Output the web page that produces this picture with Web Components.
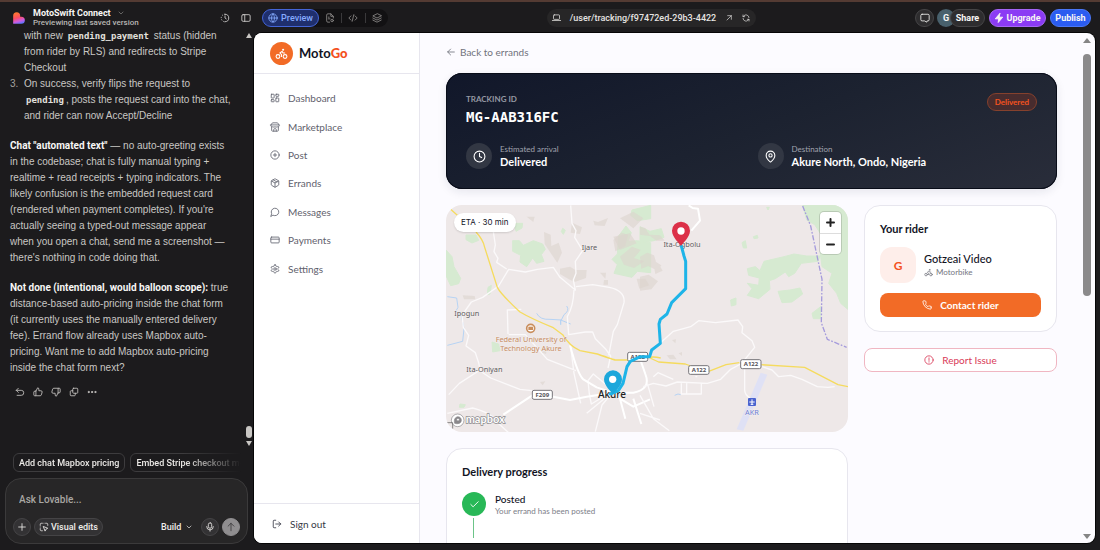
<!DOCTYPE html>
<html lang="en">
<head>
<meta charset="utf-8">
<title>MotoSwift Connect</title>
<style>
  html, body { margin: 0; height: 100%; }
  body { background: #1c1b1d; overflow: hidden; font-family: Roboto, sans-serif; }
</style>
</head>
<body>
<app-shell>
  <top-bar slot="top"></top-bar>
  <chat-panel slot="chat"></chat-panel>
  <preview-frame slot="preview">
    <moto-sidebar slot="side">
      <nav-item icon="grid">Dashboard</nav-item>
      <nav-item icon="store">Marketplace</nav-item>
      <nav-item icon="plusc">Post</nav-item>
      <nav-item icon="box">Errands</nav-item>
      <nav-item icon="msg">Messages</nav-item>
      <nav-item icon="card">Payments</nav-item>
      <nav-item icon="gear">Settings</nav-item>
    </moto-sidebar>
    <tracking-hero>
      <info-tile icon="clock" label="Estimated arrival">Delivered</info-tile>
      <info-tile icon="pin" label="Destination">Akure North, Ondo, Nigeria</info-tile>
    </tracking-hero>
    <route-map slot="wide"></route-map>
    <progress-card slot="wide"></progress-card>
    <rider-card slot="aside"></rider-card>
  </preview-frame>
</app-shell>

<script>
const ICONS = {
  history: '<path d="M12 3a9 9 0 0 1 0 18"/><path d="M12 3a9 9 0 0 0 0 18" stroke-dasharray="1 5"/><path d="M12 7v5l3 2"/>',
  panel: '<rect x="2" y="4" width="20" height="16" rx="3"/><path d="M9 4v16"/>',
  chevron: '<path d="m6 9 6 6 6-6"/>',
  globe: '<circle cx="12" cy="12" r="10"/><path d="M12 2a15 15 0 0 0 0 20 15 15 0 0 0 0-20M2 12h20"/>',
  file: '<path d="M20 12V8l-6-6H7a3 3 0 0 0-3 3v14a3 3 0 0 0 3 3h4"/><path d="M14 2v6h6M8 10h2M8 14h4"/><circle cx="17" cy="18" r="3"/>',
  code: '<path d="m7 7-5 5 5 5M17 7l5 5-5 5M14 4l-4 16"/>',
  layers: '<path d="M12 2 2 7l10 5 10-5z"/><path d="m2 12 10 5 10-5M2 17l10 5 10-5"/>',
  laptop: '<rect x="4" y="5" width="16" height="12" rx="2"/><path d="M1 20h22"/>',
  out: '<path d="M6 18 19 5M8 5h11v11"/>',
  refresh: '<path d="M21 11a9 9 0 0 0-16-5L3 8M3 3v5h5M3 13a9 9 0 0 0 16 5l2-2M21 21v-5h-5"/>',
  comment: '<path d="M5 3h14a3 3 0 0 1 3 3v10a3 3 0 0 1-3 3h-2l-1 3-5-3H5a3 3 0 0 1-3-3V6a3 3 0 0 1 3-3z"/>',
  bolt: '<path d="M14 1 3 14h8l-1 9 11-13h-8z" fill="currentColor"/>',
  undo: '<path d="M8 3 3 8l5 5"/><path d="M3 8h12a6 6 0 0 1 0 12H5"/>',
  up: '<path d="M7 10v11H4a2 2 0 0 1-2-2v-7a2 2 0 0 1 2-2zM7 10l4-8a3 3 0 0 1 3 3v4h5a3 3 0 0 1 3 3l-2 7a3 3 0 0 1-3 2H7"/>',
  down: '<path d="M17 14V3h3a2 2 0 0 1 2 2v7a2 2 0 0 1-2 2zM17 14l-4 8a3 3 0 0 1-3-3v-4H5a3 3 0 0 1-3-3l2-7a3 3 0 0 1 3-2h10"/>',
  copy: '<rect x="9" y="3" width="12" height="12" rx="2"/><path d="M9 9H5a2 2 0 0 0-2 2v8a2 2 0 0 0 2 2h8a2 2 0 0 0 2-2v-4"/>',
  dots: '<g fill="currentColor"><circle cx="4" cy="12" r="1.500"/><circle cx="12" cy="12" r="1.500"/><circle cx="20" cy="12" r="1.500"/></g>',
  plus: '<path d="M12 4v16M4 12h16"/>',
  select: '<path d="M3 8V6a3 3 0 0 1 3-3h2M16 3h2a3 3 0 0 1 3 3v2M3 16v2a3 3 0 0 0 3 3h2M12 3h0M3 12h0"/><path d="m11 11 10 4-4 2-2 4z"/>',
  mic: '<rect x="8" y="2" width="8" height="13" rx="4"/><path d="M4 11a8 8 0 0 0 16 0M12 19v3"/>',
  arrowup: '<path d="M12 21V3M5 10l7-7 7 7"/>',
  back: '<path d="M20 12H4M11 5l-7 7 7 7"/>',
  bike: '<circle cx="5.500" cy="17.500" r="3.500"/><circle cx="18.500" cy="17.500" r="3.500"/><circle cx="15" cy="5" r="1"/><path d="M12 17.500V14l-3-3 4-3 2 3h3"/>',
  grid: '<rect x="3" y="3" width="7" height="9" rx="1"/><rect x="14" y="3" width="7" height="5" rx="1"/><rect x="14" y="12" width="7" height="9" rx="1"/><rect x="3" y="16" width="7" height="5" rx="1"/>',
  store: '<path d="m2 7 4-5h12l4 5M4 12v8a2 2 0 0 0 2 2h12a2 2 0 0 0 2-2v-8M15 22v-4a2 2 0 0 0-2-2h-2a2 2 0 0 0-2 2v4M2 7h20v2a3 3 0 0 1-5 2 3 3 0 0 1-5 0 3 3 0 0 1-5 0 3 3 0 0 1-5-2z"/>',
  plusc: '<circle cx="12" cy="12" r="10"/><path d="M8 12h8M12 8v8"/>',
  box: '<path d="M11 21.700a2 2 0 0 0 2 0l7-4a2 2 0 0 0 1-1.700V8a2 2 0 0 0-1-1.700l-7-4a2 2 0 0 0-2 0l-7 4A2 2 0 0 0 3 8v8a2 2 0 0 0 1 1.700zM12 22V12M3.300 7l8.700 5 8.700-5M7.500 4.300l9 5.100"/>',
  msg: '<path d="M7.900 20A9 9 0 1 0 4 16.100L2 22z"/>',
  card: '<rect x="2" y="5" width="20" height="14" rx="2"/><path d="M2 10h20"/>',
  gear: '<path d="M12.200 2h-.4a2 2 0 0 0-2 2v.2a2 2 0 0 1-1 1.700l-.4.200a2 2 0 0 1-2 0l-.2-.1a2 2 0 0 0-2.700.7l-.2.400a2 2 0 0 0 .7 2.700l.2.100a2 2 0 0 1 1 1.700v.5a2 2 0 0 1-1 1.800l-.2.100a2 2 0 0 0-.7 2.700l.2.400a2 2 0 0 0 2.700.7l.2-.1a2 2 0 0 1 2 0l.4.200a2 2 0 0 1 1 1.700v.2a2 2 0 0 0 2 2h.4a2 2 0 0 0 2-2v-.2a2 2 0 0 1 1-1.700l.4-.2a2 2 0 0 1 2 0l.2.100a2 2 0 0 0 2.700-.7l.2-.4a2 2 0 0 0-.7-2.700l-.2-.1a2 2 0 0 1-1-1.800v-.5a2 2 0 0 1 1-1.700l.2-.1a2 2 0 0 0 .7-2.700l-.2-.4a2 2 0 0 0-2.700-.7l-.2.100a2 2 0 0 1-2 0l-.4-.2a2 2 0 0 1-1-1.700V4a2 2 0 0 0-2-2z"/><circle cx="12" cy="12" r="3"/>',
  exit: '<path d="M9 3H5a2 2 0 0 0-2 2v14a2 2 0 0 0 2 2h4M9 12h12M16 7l5 5-5 5"/>',
  clock: '<circle cx="12" cy="12" r="10"/><path d="M12 6v6l4 2"/>',
  pin: '<path d="M20 10c0 5-5.500 10.200-7.400 11.800a1 1 0 0 1-1.200 0C9.500 20.200 4 15 4 10a8 8 0 0 1 16 0"/><circle cx="12" cy="10" r="3"/>',
  phone: '<path d="M22 16.900v3a2 2 0 0 1-2.200 2A19.800 19.800 0 0 1 2.100 4.200 2 2 0 0 1 4.100 2h3a2 2 0 0 1 2 1.700c.1 1 .4 1.900.7 2.800a2 2 0 0 1-.5 2.100L8.100 9.900a16 16 0 0 0 6 6l1.300-1.300a2 2 0 0 1 2.100-.4c.9.300 1.800.600 2.800.700A2 2 0 0 1 22 16.900z"/>',
  alert: '<circle cx="12" cy="12" r="10"/><path d="M12 7v6M12 16v1"/>',
  check: '<path d="M20 6 9 17l-5-5"/>'
};

function define(name, css, html, setup) {
  const template = document.createElement('template');
  template.innerHTML = `<style>*{box-sizing:border-box}button,input,select{font:inherit;color:inherit;margin:0;padding:0;border:0;background:none}button{white-space:nowrap}a{color:inherit;text-decoration:none}${css}</style>${html}`;
  customElements.define(name, class extends HTMLElement {
    constructor() {
      super();
      this.attachShadow({ mode: 'open' }).append(template.content.cloneNode(true));
    }
    connectedCallback() { if (setup) setup(this, this.shadowRoot); }
  });
}

define('ui-icon', ':host{display:inline-flex;flex:none;width:var(--size,10px);height:var(--size,10px)}svg{width:100%;height:100%;overflow:visible}',
  '<svg viewBox="0 0 24 24" fill="none" stroke="currentColor" stroke-width="2" stroke-linecap="round" stroke-linejoin="round" aria-hidden="true"></svg>',
  (host, root) => { root.querySelector('svg').innerHTML = ICONS[host.getAttribute('name')]; });

define('app-shell', `
  :host{display:grid;grid-template:31px minmax(0,1fr)/254px minmax(0,1fr);height:100vh;box-sizing:border-box;border-top:2px solid #543b33;background:#1c1b1d}
  .top{grid-column:1/-1}
  .chat,.preview{display:grid;grid-template-columns:minmax(0,1fr);min-height:0;min-width:0}
  .preview{padding:0 5px 7px 0}
`, '<div class="top"><slot name="top"></slot></div><div class="chat"><slot name="chat"></slot></div><div class="preview"><slot name="preview"></slot></div>');

define('top-bar', `
  :host{display:flex;justify-content:space-between;align-items:center;height:31px;color:#d6d4d2;font-size:9px;font-weight:500;line-height:12px}
  .brand{display:flex;align-items:center;width:254px;padding:0 3px 0 12px;margin-right:8px}
  .heart{width:14px;height:14px;margin-right:7px}
  .names{flex:1}
  .title{display:flex;align-items:center;gap:6px;font-weight:700;color:#f7f6f4;height:11px}
  .title ui-icon{--size:8px;color:#8a8886}
  .sub{font-size:8px;line-height:10px;color:#b9b7b4}
  .tools{display:flex;gap:11px}
  .tools button{display:flex}
  .tabs{display:flex;align-items:center;width:126px;height:18px;border-radius:9px;background:#121113;color:#8f8d8b}
  .tabs button{display:flex;justify-content:center;flex:1}
  .tabs button+button+button{border-left:1px solid #3a393b}
  .tabs .on{flex:none;align-items:center;gap:3px;width:57px;height:18px;border:1px solid #4465d8;border-radius:9px;background:#1f2f6d;color:#86abff}
  .url{display:flex;align-items:center;gap:9px;height:18px;margin:0 auto;padding:0 6px 0 5px;border-radius:9px;background:#272627;color:#e6e4e2;white-space:nowrap}
  .url ui-icon{--size:8px}
  .url ui-icon:first-child{--size:9px}
  .end{display:flex;justify-content:flex-end;padding-right:9px;font-weight:700;color:#f7f6f4}
  .end button{display:flex;align-items:center;justify-content:center;height:18px;border-radius:9px;border:1px solid #454446;background:#2e2d2f;gap:2px}
  .end .c{width:19px;margin-right:3px}
  .av{width:18px;height:18px;padding-left:6px;border-radius:9px;background:#48606c;line-height:18px}
  .end .share{width:35px;margin:0 4px 0 -5px}
  .end .upgrade{width:57px;margin-right:4px;background:#8b3bf4;border-color:#a465f6}
  .end .publish{width:41px;background:#2b5cf0;border-color:#4a76f5}
`, `
  <div class="brand">
    <svg class="heart" viewBox="0 0 24 24" aria-hidden="true"><defs><linearGradient id="h" x1="0.300" y1="0" x2="0.600" y2="1"><stop offset="0" stop-color="#ff7a2c"/><stop offset=".45" stop-color="#fb4f62"/><stop offset=".75" stop-color="#cf5be0"/><stop offset="1" stop-color="#5b74ff"/></linearGradient></defs><path fill="url(#h)" d="M2 22V8a6 6 0 0 1 12 0v2h2a6 6 0 0 1 0 12z"/></svg>
    <div class="names"><div class="title">MotoSwift Connect <ui-icon name="chevron"></ui-icon></div><div class="sub">Previewing last saved version</div></div>
    <div class="tools"><button aria-label="History"><ui-icon name="history"></ui-icon></button><button aria-label="Toggle panel"><ui-icon name="panel"></ui-icon></button></div>
  </div>
  <div class="tabs"><button class="on"><ui-icon name="globe"></ui-icon>Preview</button><button aria-label="Files"><ui-icon name="file"></ui-icon></button><button aria-label="Code"><ui-icon name="code"></ui-icon></button><button aria-label="Layers"><ui-icon name="layers"></ui-icon></button></div>
  <div class="url"><ui-icon name="laptop"></ui-icon><span>/user/tracking/f97472ed-29b3-4422</span><ui-icon name="out"></ui-icon><ui-icon name="refresh"></ui-icon></div>
  <div class="end"><button class="c" aria-label="Comments"><ui-icon name="comment"></ui-icon></button><div class="av">G</div><button class="share">Share</button><button class="upgrade"><ui-icon name="bolt"></ui-icon>Upgrade</button><button class="publish">Publish</button></div>
`);

define('chat-panel', `
  :host{display:flex;flex-direction:column;min-width:0;min-height:0;padding:0 6px 6px 5px;position:relative;margin-top:-6px;color:#c9c7c4;font-size:10px}
  .log{flex:1;min-height:0;overflow:hidden;padding:1px 5px 0;font-family:"Liberation Sans",Arial,sans-serif;line-height:16px;white-space:nowrap}
  ol,p{margin:0 0 14px;padding:0}
  ol{list-style:none}
  li{display:flex}
  li i{flex:none;width:14px;font-style:normal;color:#a3a19f}
  b{font-family:Roboto,sans-serif;color:#f7f6f4}
  code{font:bold 9px "DejaVu Sans Mono",monospace;padding:0 2px;color:#e3e1de}
  .acts{display:flex;gap:8px;margin-top:-3px;padding:0 0 0 5px}
  .acts button{display:flex}
  .chips{display:flex;gap:5px;margin:0 0 6px 8px;-webkit-mask:linear-gradient(90deg,#000 170px,transparent 228px);mask:linear-gradient(90deg,#000 170px,transparent 228px)}
  .chips button{flex:none;height:19px;padding:0 5px;border:1px solid #3d3c3e;border-radius:6px;font-weight:500;color:#eceae7;font-size:9px}
  .bar{position:absolute;left:246px;top:6px;bottom:104px;width:6px;display:flex;flex-direction:column;justify-content:flex-end;align-items:center;gap:3px}
  .bar i{width:6px;height:12px;border-radius:3px;background:#c9c7c4}
  .bar .u,.bar .d{width:0;height:0;border-radius:0;background:none;border:3px solid transparent;border-top:0;border-bottom:5px solid #c9c7c4}
  .bar .u{margin-bottom:auto}
  .bar .d{border-bottom:0;border-top:5px solid #c9c7c4}
`, `
  <div class="log">
    <ol><li><i></i><span>with new <code>pending_payment</code> status (hidden<br>from rider by RLS) and redirects to Stripe<br>Checkout</span></li>
    <li><i>3.</i><span>On success, verify flips the request to<br><code>pending</code>, posts the request card into the chat,<br>and rider can now Accept/Decline</span></li></ol>
    <p><b>Chat "automated text"</b> — no auto-greeting exists<br>in the codebase; chat is fully manual typing +<br>realtime + read receipts + typing indicators. The<br>likely confusion is the embedded request card<br>(rendered when payment completes). If you're<br>actually seeing a typed-out message appear<br>when you open a chat, send me a screenshot —<br>there's nothing in code doing that.</p>
    <p><b>Not done (intentional, would balloon scope):</b> true<br>distance-based auto-pricing inside the chat form<br>(it currently uses the manually entered delivery<br>fee). Errand flow already uses Mapbox auto-<br>pricing. Want me to add Mapbox auto-pricing<br>inside the chat form next?</p>
    <div class="acts"><button aria-label="Undo"><ui-icon name="undo"></ui-icon></button><button aria-label="Good"><ui-icon name="up"></ui-icon></button><button aria-label="Bad"><ui-icon name="down"></ui-icon></button><button aria-label="Copy"><ui-icon name="copy"></ui-icon></button><button aria-label="More"><ui-icon name="dots"></ui-icon></button></div>
  </div>
  <div class="chips"><button>Add chat Mapbox pricing</button><button>Embed Stripe checkout mo</button></div>
  <chat-composer></chat-composer>
  <div class="bar"><i class="u"></i><i></i><i class="d"></i></div>
`);

define('chat-composer', `
  :host{display:flex;flex-direction:column;justify-content:space-between;box-sizing:border-box;height:66px;padding:10px 7px 7px;border:1px solid #3b3a3b;border-radius:16px;background:#272627}
  input{width:100%;height:20px;padding:0 6px;font-size:10px;font-weight:500;outline:0}
  input::placeholder{color:#a9a7a3;opacity:1}
  .row{display:flex;align-items:center;gap:3px;font-size:9px;font-weight:500;color:#efedea}
  button{display:flex;align-items:center;justify-content:center;gap:2px;height:18px;min-width:18px;border:1px solid #454446;border-radius:9px;background:#333234}
  .ve{width:69px}
  .build{display:flex;align-items:center;margin:0 5px 0 auto}
  .build ui-icon{--size:8px}
  select{appearance:none;width:24px;font-weight:500}
  .send{background:#908e90;border-color:#908e90;color:#3a393b}
`, `
  <input type="text" placeholder="Ask Lovable..." aria-label="Ask Lovable">
  <div class="row"><button aria-label="Add"><ui-icon name="plus"></ui-icon></button><button class="ve"><ui-icon name="select"></ui-icon>Visual edits</button>
  <label class="build"><select aria-label="Mode"><option>Build</option></select><ui-icon name="chevron"></ui-icon></label>
  <button aria-label="Dictate"><ui-icon name="mic"></ui-icon></button><button class="send" aria-label="Send"><ui-icon name="arrowup"></ui-icon></button></div>
`);

define('preview-frame', `
  :host{display:grid;grid-template-columns:166px minmax(0,1fr) 12px;min-height:0;overflow:hidden;border-radius:8px;background:#fcfbff;box-shadow:0 0 0 1px #060606;font-family:Lato,sans-serif;font-size:10px;color:#12141f}
  .side{display:grid;min-height:0}
  main{min-height:0;overflow:hidden;padding:12px 26px 0}
  .back{display:flex;align-items:center;gap:4px;height:14px;margin-bottom:14px;color:#70727c}
  .cols{display:grid;grid-template-columns:repeat(3,minmax(0,1fr));gap:16px;margin-top:16px}
  .wide{grid-column:span 2}
  .wide,.aside{display:flex;flex-direction:column;gap:16px}
  .track{display:flex;flex-direction:column;align-items:center;padding:5px 4px 4px 0}
  .track i{border:4px solid transparent;border-top:0;border-bottom:5px solid #858585}
  .track b{width:8px;height:242px;margin-top:11px;border-radius:4px;background:#8b8a8b}
  .track .d{margin-top:auto;border-bottom:0;border-top:5px solid #858585}
`, `
  <div class="side"><slot name="side"></slot></div>
  <main><a class="back" href="#errands"><ui-icon name="back"></ui-icon>Back to errands</a><slot></slot>
  <div class="cols"><div class="wide"><slot name="wide"></slot></div><div class="aside"><slot name="aside"></slot></div></div></main>
  <div class="track"><i></i><b></b><i class="d"></i></div>
`);

define('moto-sidebar', `
  :host{display:flex;flex-direction:column;min-height:0;border-right:1px solid #e7e6ee;background:#fff}
  .logo{display:flex;align-items:center;gap:6px;height:41px;padding:0 16px;border-bottom:1px solid #e7e6ee;font-size:13px;font-weight:700}
  .logo b{color:#f4511e}
  .disc{display:flex;align-items:center;justify-content:center;width:23px;height:23px;border-radius:50%;background:#f26b26;color:#fff;--size:13px}
  nav{display:grid;grid-auto-rows:1fr;height:199px;margin-top:10px}
  .out{display:flex;align-items:center;gap:8px;height:40px;margin-top:auto;padding:0 18px;border-top:1px solid #e7e6ee;color:#363946;width:100%}
`, `
  <div class="logo"><span class="disc"><ui-icon name="bike"></ui-icon></span><span>Moto<b>Go</b></span></div>
  <nav><slot></slot></nav>
  <button class="out"><ui-icon name="exit"></ui-icon>Sign out</button>
`);

define('nav-item', ':host{display:grid}a{display:flex;align-items:center;gap:8px;padding:0 16px;color:#5f616d}',
  '<a href="#"><ui-icon></ui-icon><span><slot></slot></span></a>',
  (host, root) => {
    const icon = document.createElement('ui-icon');
    icon.setAttribute('name', host.getAttribute('icon'));
    root.querySelector('ui-icon').replaceWith(icon);
  });
</script>
<script>
define('tracking-hero', `
  :host{display:block;height:116px;box-sizing:border-box;padding:20px;border-radius:16px;background:linear-gradient(160deg,#11172a,#1c2230 50%,#292d3a);box-shadow:0 0 0 1px #080c18 inset,0 3px 10px #1a204018;color:#fff}
  .top{display:flex;justify-content:space-between;align-items:flex-start}
  .k{font-size:8px;font-weight:700;line-height:12px;color:#9598a3}
  .id{font:bold 14px/24px "DejaVu Sans Mono",monospace}
  .badge{height:18px;padding:0 7px;border:1px solid #85412d;border-radius:9px;background:#482c2e;color:#f4531f;font-size:8px;font-weight:700;line-height:16px}
  .tiles{display:grid;grid-template-columns:1fr 1fr;gap:12px;margin-top:14px}
`, `
  <div class="top"><div><div class="k">TRACKING ID</div><div class="id">MG-AAB316FC</div></div><span class="badge">Delivered</span></div>
  <div class="tiles"><slot></slot></div>
`);

define('info-tile', `
  :host{display:flex;align-items:center;gap:8px}
  .ic{display:flex;align-items:center;justify-content:center;width:26px;height:26px;border-radius:50%;background:#323743;--size:13px}
  small{display:block;font-size:8px;line-height:11px;color:#a0a3ad}
  b{display:block;font-size:11px;line-height:13px;font-weight:700}
`, '<span class="ic"></span><span><small></small><b><slot></slot></b></span>',
  (host, root) => {
    const icon = document.createElement('ui-icon');
    icon.setAttribute('name', host.getAttribute('icon'));
    root.querySelector('.ic').replaceChildren(icon);
    root.querySelector('small').textContent = host.getAttribute('label');
  });

define('route-map', `
  :host{display:block;position:relative;height:227px;border-radius:16px;overflow:hidden;background:#eee8e8}
  svg.map{display:block;width:100%;height:100%;font-family:"Noto Sans",sans-serif}
  .eta{position:absolute;left:8px;top:8px;height:19px;padding:0 7px;border-radius:10px;background:#fff;font-size:8px;font-family:Inter,sans-serif;line-height:19px;box-shadow:0 1px 2px #0002}
  .zoom{position:absolute;right:7px;top:7px;width:21px;border-radius:4px;background:#fff;box-shadow:0 0 0 1px #0002}
  .zoom button{display:grid;place-items:center;width:21px;height:21px}
  .zoom button+button{border-top:1px solid #ddd}
  .g{fill:#d6ead1}.h{fill:#dcd4cd;opacity:.6}.w{fill:none;stroke:#fbf9fa;stroke-width:4}.w2{fill:none;stroke:#fff;stroke-width:6}.y{fill:none;stroke:#f5db5e;stroke-width:4}.r{fill:none;stroke:#b6d3f4;stroke-width:3}
  .w,.w2,.y,.r,.g,.h{stroke-linejoin:round}
  .g{stroke:#d6ead1;stroke-width:3}
  .t{font-size:22px;fill:#5c5a5c;paint-order:stroke;stroke:#f3eeee;stroke-width:3px}
  .rt{fill:none;stroke:#1eb4e8;stroke-width:9;stroke-linejoin:round;stroke-linecap:round}
  .s rect{fill:#fff;stroke:#77757a;stroke-width:3}
  .s text{font-size:18px;font-weight:700;fill:#55535a;text-anchor:middle}
`, `
  <svg class="map" viewBox="0 0 1206 681" preserveAspectRatio="xMidYMid slice" role="img" aria-label="Route from Akure to Ita-Ogbolu">
   <g transform="translate(-18 -15)">
    <path class="g" d="M18 150l18 20 6 30 20 35-6 16-24 6-14-30zM78 105l30 0 8 16-20 8-18-10zM218 122l20 0 12 14 30-14 28 10 8 16-12 16 8 20-22 6-12-16-18 26-20-14 2-20-24-12zM156 426l20 6 4 20-22 4zM144 262l10-6-4 26-8 2zM222 70l26 0-2 14-18 10zM576 30l56-14v40l-40 6-20-16zM536 108l22-30 16 20-10 26 28-2 40 6v90l-40-4-16 18-54-12 10-26-16-16 16-16zM60 612l16 2-4 8-14 0zM368 85l8 6-6 12-6-8z"/>
    <path class="h" d="M312 96l20 8 2 34 22-10 10 30-14 30-14-20-24-36zM396 68l30 14-6 20-28-4zM360 206l30-6 16 10 34 0-2 24-34 12-20-10-24-14zM460 62l14 4 30-12-10 24-30-2zM520 120l24-22 20 6-8 34-30 16zM540 170l36-30 26 10-20 24 30 10-30 20-30-10zM480 218l18 0-2 18zM492 240l12 0 0 14-14 0zM68 286l36 2 2 10-34 0zM300 456l20-4-2 10zM300 546l16-2-8 12zM590 236l26 0 12 20-30 10zM168 50l30 20-4 14-30-12zM260 50l24 0-4 16z"/>
    <path class="r" d="M22 290l28 4 4 28-8 14 18 10 8 40-4 38-46 12M290 340q10 20 40 18l34 2 8-16q18-12 8-26M362 360l0 14 0-14 30 12"/>
    <path class="w" d="M160 95l6 40-4 20 12 20-4 12 30 20M176 258l30-50 50 8 36-8 48-6 20 30 46 38-6-30 8-20-2-36 22-32-24-40 4-20-12-22-4-54M402 270q-2 50-20 80l4 54 50-8 22 0 8 20 30 30 16 22-8 36M408 260l50-6 50 8q48 10 44 46l-20 66-12 20-14 72M176 258l-48 34-34 14-28 40 4 36 16 24-8 32 28 20 10 30 4 22-62 40-32 34M116 510l36 24 88 34 36 4M204 402l-2-72 42-2M206 404l50 0 66 74 86 34M392 440l10 80 20 90M22 640l76-16q60 16 70 40l40 36M466 695l20-80 30-36 20 14M440 640l60-50M444 542l16-20 60 50-66 40-6-30z"/>
    <path class="w2" d="M390 436q24 90 40 102l40 24 48 16h62q54-10 36-56l-14-40M190 644l96-64 104 20 50-10 78-12M520 576l20 20 40 24 50-22M540 596l16 60M580 596l24 76"/>
    <path class="y" d="M32 28l20 18M108 96q22 24 26 46l38 120q10 20 68 74 34 20 98 46l30 22q20 34 52 48l52 10q52 18 54 18h64l32-6q16-6 40 0"/>
   </g>
   <g transform="translate(582 -15)">
    <path class="g" d="M488 16h138v314l-24-20-12-30-24-30 10-30-30-20-6-46 10-40-26-40-24-14zM372 184l60-14 30-8 38 6 40 0-6 16-50 6-20 30-18 10-10-14-30 20-18 6 2 26-34 28-34-10 14-20-14-16 34 6 2-22-32-8-4-20 24-6 14 12zM306 128l10-6 4 22-10 0zM340 110l12-4 2 8-12 2zM414 274l36-4 30-6 8 18-32 24-30 2zM272 300l16-6 0 20-14 4zM516 340l26-20 0 36-22 0zM0 80l30 14 34-8 8 26-30 10-42 6zM380 22l8 0-4 8z"/>
    <path class="h" d="M0 80l16 4 12 20 32 2 14 16-24 0-20-14-30-4zM-60 55l40-20 30 20-30 30zM-80 110l50-10 20 30-50 20zM0 170l22-12 20 8 6 20 16 10-10 16-30-14-20 8zM0 230l26-6 28 20-20 24-34 4zM40 190l16 2 12 20-22 10zM96 420l12-2-2 12zM80 466l20-2 10 14-20 0zM116 460l10-4 0 12z"/>
    <path fill="#dfe1f5" d="M362 518l20 6-72 168-20-4z"/>
    <path class="w" d="M60 430l40-36 52-14 24-18 50 6 68-8 14 20-2 18 30 24 8 20-34 42-8 14M302 492l-30 16-30 30-40 12-90-4-34 12-38-8-30 10M314 500v70q0 14 16 24M366 500l30 10 20 20 36-4 34 12 46 22 32 2 20-2M40 530l14-12 46 20M124 550v32h60v-32M140 546v34M166 530l6 0M0 586l40 70 48 36M0 640l60 20M22 550l20 70"/>
    <path class="w2" d="M146 16l12 8 16 2 6 36-26 30"/>
    <path class="y" d="M30 474l26 12 80 6 16 6M206 514l52-20 40-6M364 494l130 8 100 52 30 6"/>
    <path fill="none" stroke="#a59bdc" stroke-width="4" stroke-dasharray="16 5 5 5" d="M488 18l24 60 34 160-2 130 18 50 58 24"/>
    <path class="r" d="M104 586l10-4 8 2"/>
   </g>
   <g transform="translate(-18 -15)">
    <text class="t" x="425" y="149">Ijare</text><text class="t" x="43" y="348">Ipogun</text><text class="t" x="79" y="516">Ita-Oniyan</text>
    <circle cx="272" cy="385" r="12" fill="#fff" stroke="#c98d5c" stroke-width="5"/><path d="M265 380h14v10h-14z" fill="#c98d5c"/>
    <g class="t" style="fill:#c68b5f" text-anchor="middle"><text x="273" y="425">Federal University of</text><text x="273" y="452">Technology Akure</text></g>
    <g class="s"><rect x="277" y="571" width="60" height="27" rx="5"/><text x="307" y="591">F209</text><rect x="563" y="457" width="60" height="27" rx="5"/><text x="593" y="477">A122</text></g>
    <text x="516" y="594" text-anchor="middle" font-size="30" font-weight="500" fill="#222">Akure</text>
    <g stroke="#8a888b" stroke-width="2" fill="#fff"><circle cx="53" cy="661" r="19"/><path d="M44 670c-6-22 18-26 20-10 0 12-12 12-20 10z" fill="#8a888b"/><circle cx="54" cy="659" r="4"/></g>
    <text x="77" y="669" font-size="33" font-weight="700" fill="#fff" stroke="#8a888b" stroke-width="4" paint-order="stroke" style="font-family:Lato,sans-serif">mapbox</text>
    <path d="M20 668h18v18" fill="none" stroke="#555" stroke-width="2"/>
   </g>
   <g transform="translate(582 -15)">
    <text class="t" x="126" y="140" text-anchor="middle">Ita-Ogbolu</text>
    <g class="s"><rect x="146" y="497" width="61" height="26" rx="5"/><text x="177" y="517">A122</text><rect x="302" y="479" width="61" height="27" rx="5"/><text x="333" y="499">A122</text></g>
    <rect x="324" y="594" width="24" height="24" rx="3" fill="#4a63cf"/><path d="M336 598v16M328 606h16M332 613h8" stroke="#fff" stroke-width="3"/>
    <text x="336" y="645" text-anchor="middle" class="t" style="fill:#6d7fd6">AKR</text>
    <path class="rt" d="M124 138l8 30 5 16v82l-42 42-14 34-20 16-4 14 4 58-26 20-6 20h-28l-30 14-10 16-12 50-14 22-24 10"/>
    <path fill="#dc3048" d="M123 138c-4-8-27-26-27-46a27 27 0 0 1 54 0c0 20-23 38-27 46z"/><circle cx="123" cy="93" r="11" fill="#fff"/>
   </g>
   <g transform="translate(-18 -15)"><path fill="#1ca7db" d="M519 584c-4-8-27-26-27-46a27 27 0 0 1 54 0c0 20-23 38-27 46z"/><circle cx="518" cy="538" r="11" fill="#fff"/></g>
  </svg>
  <span class="eta">ETA · 30 min</span>
  <div class="zoom"><button aria-label="Zoom in"><svg width="9" height="9" viewBox="0 0 9 9"><path d="M4.500 1v7M1 4.500h7" stroke="#222" stroke-width="2" stroke-linecap="round"/></svg></button><button aria-label="Zoom out"><svg width="9" height="9" viewBox="0 0 9 9"><path d="M1 4.500h7" stroke="#222" stroke-width="2" stroke-linecap="round"/></svg></button></div>
`);

define('progress-card', `
  :host{display:block;box-sizing:border-box;height:160px;padding:15px;border:1px solid #e7e6ee;border-radius:16px;background:#fff}
  h2{margin:0 0 12px;font-size:11px;line-height:16px;font-weight:700}
  .step{display:grid;grid-template-columns:24px 1fr;column-gap:9px}
  .dot{display:grid;place-items:center;width:24px;height:24px;border-radius:50%;background:#28b857;color:#fff;--size:11px}
  .line{width:1px;height:20px;margin:2px 0 0 11px;background:#6cc488}
  b{display:block;font-size:10px;line-height:14px;font-weight:500}
  small{display:block;font-size:8px;line-height:10px;color:#7c7e88}
`, `<h2>Delivery progress</h2><div class="step"><span class="dot"><ui-icon name="check"></ui-icon></span><div><b>Posted</b><small>Your errand has been posted</small></div><span class="line"></span></div>`);

define('rider-card', `
  :host{display:flex;flex-direction:column;gap:16px}
  .card{box-sizing:border-box;height:127px;padding:15px;border:1px solid #e7e6ee;border-radius:16px;background:#fff}
  h2{margin:0 0 10px;font-size:11px;line-height:16px;font-weight:700}
  .who{display:flex;align-items:center;gap:8px;margin-bottom:10px}
  .av{display:grid;place-items:center;width:36px;height:36px;border-radius:12px;background:#feeeea;color:#f4511e;font-size:12px;font-weight:700}
  .who b{display:block;font-size:11px;line-height:14px;font-weight:500}
  small{display:flex;align-items:center;gap:3px;font-size:8px;line-height:12px;color:#74767f;--size:9px}
  button{display:flex;align-items:center;justify-content:center;gap:8px;width:100%;height:24px;border-radius:8px}
  .call{background:#f26b26;color:#fff;font-weight:700}
  .report{border:1px solid #f0b6c2;background:#fff;color:#d93a58}
`, `
  <div class="card"><h2>Your rider</h2><div class="who"><span class="av">G</span><span><b>Gotzeai Video</b><small><ui-icon name="bike"></ui-icon>Motorbike</small></span></div>
  <button class="call"><ui-icon name="phone"></ui-icon>Contact rider</button></div>
  <button class="report"><ui-icon name="alert"></ui-icon>Report Issue</button>
`);
</script>
</body>
</html>
